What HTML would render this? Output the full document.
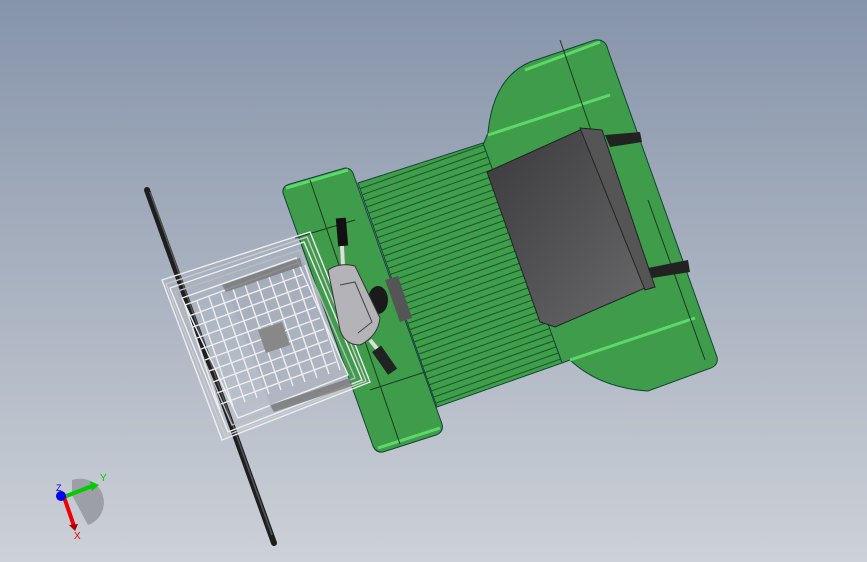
<!DOCTYPE html>
<html><head><meta charset="utf-8"><style>
html,body{margin:0;padding:0;width:867px;height:562px;overflow:hidden}
body{background:linear-gradient(#8694aa,#a9b2c0 50%,#cdd1d8)}
svg{position:absolute;left:0;top:0}
</style></head><body>
<svg width="867" height="562" viewBox="0 0 867 562">
<defs>
<linearGradient id="bat" x1="0" y1="0" x2="1" y2="1"><stop offset="0" stop-color="#3a3a3c"/><stop offset="1" stop-color="#6a6a6c"/></linearGradient>
<clipPath id="mat"><polygon points="358,183 483,143 562,363 437,407"/></clipPath>
</defs>
<!-- wheel -->
<line x1="147" y1="190" x2="274" y2="543" stroke="#1e1e20" stroke-width="6" stroke-linecap="round"/>
<line x1="150" y1="192" x2="272" y2="535" stroke="#555" stroke-width="1.5"/>
<!-- right body -->
<path d="M483,145 L488,133 Q493,78 530,62 L595,40 Q606,39 608,50 L717,357 Q719,366 708,369 L648,391 Q600,388 570,360 L562,363 Z" fill="#3e9c4b" stroke="#143" stroke-width="1"/>
<path d="M488,135 L610,95 M525,70 L600,42 M570,360 L695,318" stroke="#5fd86a" stroke-width="3" fill="none"/>
<path d="M560,40 L603,165 M648,200 L705,360" stroke="#1c3a20" stroke-width="1" fill="none"/>
<!-- mat -->
<polygon points="358,183 483,143 562,363 437,407" fill="#3f9e4c" stroke="#143" stroke-width="1"/>
<g clip-path="url(#mat)"><line x1="420" y1="160" x2="502" y2="392" stroke="#1f5a28" stroke-width="140" stroke-dasharray="1.1 5.4"/></g>
<!-- left block -->
<path d="M283,193 Q282,186 290,184 L345,168 Q352,168 354,176 L442,424 Q444,432 436,435 L383,452 Q376,453 373,446 Z" fill="#3e9c4b" stroke="#143" stroke-width="1"/>
<path d="M286,188 L348,170 M378,448 L440,428" stroke="#5fd86a" stroke-width="3"/>
<path d="M310,180 L400,444 M295,238 L355,220 M370,390 L425,372" stroke="#1c3a20" stroke-width="1"/>
<!-- battery -->
<polygon points="487,172 580,130 602,132 652,285 555,327 540,322" fill="url(#bat)" stroke="#222"/>
<polygon points="580,128 602,130 655,287 645,290" fill="#555" stroke="#222"/>
<polygon points="605,135 640,132 642,142 610,147" fill="#222"/>
<polygon points="648,268 688,260 690,272 652,278" fill="#222"/>
<!-- basket -->
<polygon points="225,285 300,258 350,380 272,410" fill="#9aa0aa" opacity=".25"/>
<g stroke="#eeeef0" stroke-width="1.4" fill="none">
<path d="M162,280 L310,232 L370,382 L222,440 Z"/>
<path d="M166,284 L307,237 L366,381 L225,436 Z" stroke="#ccc"/>
<path d="M170,288 L304,242 L362,380 L228,432 Z"/>
<path d="M175,292 L300,250 L355,378 L232,425 Z" stroke="#bbb"/>
<path d="M182,298 L296,258 L348,375 L238,418 Z"/>
<path d="M185,305 L220,410 M197,301 L233,406 M209,297 L245,402 M221,293 L257,398 M233,289 L269,394 M245,285 L281,390 M257,281 L293,386 M269,277 L305,382 M281,273 L317,378 M293,269 L329,374 M305,265 L340,370"/>
<path d="M185,305 L300,262 M189,316 L304,274 M193,327 L308,285 M197,338 L312,296 M201,349 L316,307 M205,360 L320,318 M209,371 L324,329 M213,382 L328,340 M217,393 L332,351 M221,404 L336,362"/>
</g>
<polygon points="258,330 282,322 290,345 266,353" fill="#888"/>
<polygon points="222,285 300,258 302,266 226,292" fill="#777" opacity=".8"/>
<polygon points="270,405 350,378 352,386 274,412" fill="#777" opacity=".8"/>
<!-- handle -->
<rect x="337" y="218" width="10" height="28" fill="#111" transform="rotate(-5 342 232)"/>
<line x1="342" y1="246" x2="343" y2="266" stroke="#ddd" stroke-width="4"/>
<line x1="370" y1="340" x2="388" y2="362" stroke="#ddd" stroke-width="4"/>
<rect x="379" y="346" width="11" height="28" fill="#222" transform="rotate(-35 385 360)"/>
<ellipse cx="378" cy="300" rx="10" ry="14" fill="#1a1a1a"/>
<polygon points="385,280 398,276 412,318 400,322" fill="#555"/>
<path d="M328,270 Q340,262 355,266 L380,318 Q378,336 360,345 Q345,345 340,330 Z" fill="#b4b4b8" stroke="#333"/>
<path d="M340,285 L355,282 L372,322 L358,333" fill="none" stroke="#444"/>
<!-- triad -->
<path d="M72,480 A22,22 0 0 1 88,525 L72,495 Z" fill="#9c9fa6"/>
<line x1="64" y1="497" x2="92" y2="486" stroke="#0c0" stroke-width="4"/>
<polygon points="90,481 99,485 92,491" fill="#0c0"/>
<line x1="64" y1="497" x2="74" y2="526" stroke="#e00" stroke-width="4"/>
<polygon points="69,525 78,524 75,531" fill="#a00"/>
<circle cx="61" cy="496" r="5" fill="#00e"/>
<text x="100" y="481" font-family="Liberation Sans" font-size="10" fill="#0c0">Y</text>
<text x="56" y="491" font-family="Liberation Sans" font-size="9" fill="#00e">Z</text>
<text x="74" y="539" font-family="Liberation Sans" font-size="10" fill="#e00">X</text>
</svg>
</body></html>
